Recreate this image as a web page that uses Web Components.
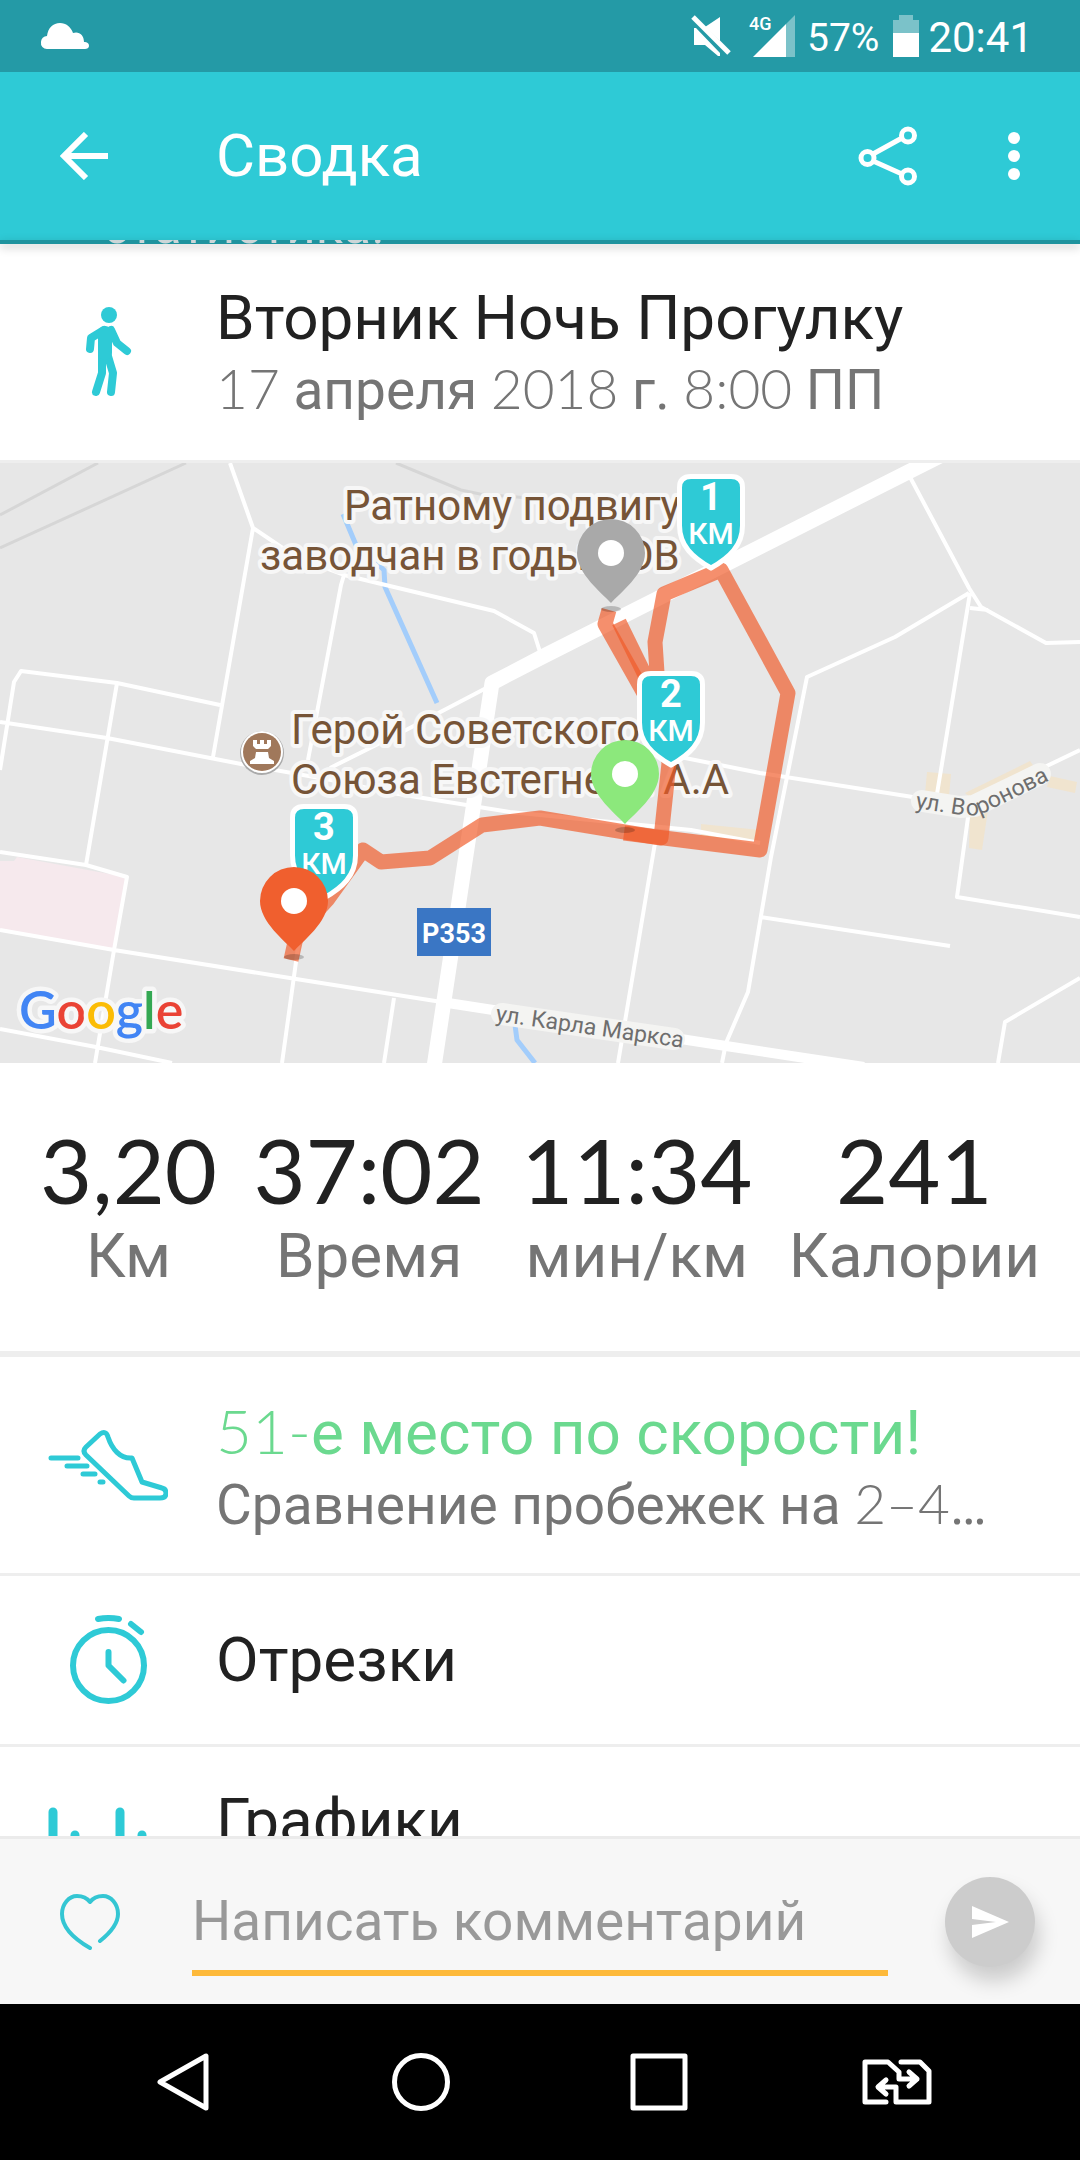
<!DOCTYPE html>
<html lang="ru">
<head>
<meta charset="utf-8">
<meta name="viewport" content="width=device-width, initial-scale=1">
<title>Сводка</title>
<style>
  html, body { height: 100%; }
  body {
    margin: 0;
    background: #fff;
    color: #212121;
    font-family: Roboto, "Noto Sans", sans-serif;
    --teal: #2ecad6;
    --teal-dark: #249aa6;
    --muted: #757575;
    --line: #eee;
    --num: Lato, Roboto, sans-serif;
  }
</style>
</head>
<body>
<run-summary></run-summary>

<script>
// Attaches an open shadow root and fills it from the class's static markup.
class BaseElement extends HTMLElement {
  constructor() {
    super();
    this.attachShadow({ mode: "open" });
    this.shadowRoot.innerHTML = this.constructor.markup;
  }
}

// <status-bar> — system icons, battery and time.
class StatusBar extends BaseElement {
  static markup = `
    <style>
      :host {
        display: flex;
        align-items: center;
        height: 72px;
        padding: 0 47px 0 41px;
        background: var(--teal-dark);
        color: #fff;
      }
      svg { display: block; overflow: visible; fill: #fff; }
      .right { display: flex; align-items: center; margin-left: auto; }
      .mute { margin-right: 18px; }
      .signal { margin-right: 12px; }
      .pct, .time { padding-top: 4px; line-height: 56px; }
      .pct { font-size: 39px; margin-right: 14px; }
      .battery { margin-right: 9px; }
      .time { font-size: 42px; }
    </style>
    <svg width="48" height="26" viewBox="0 0 48 26"><path d="M6 26a6 6 0 0 1-6-7 6 6 0 0 1 6-6C7 5 12 0 19 0c6 0 11 4 13 10 6-2 11 2 11 9 3 0 5 1 5 4 0 2-2 3-4 3z"/></svg>
    <div class="right">
      <svg class="mute" width="40" height="42" viewBox="0 0 40 42">
        <path d="M29 2v24L14 12zM3 13h2l24 25v3h-2L14 30H3z"/>
        <path d="M2 2l36 36" stroke="#fff" stroke-width="5"/>
      </svg>
      <svg class="signal" width="46" height="42" viewBox="0 0 46 42">
        <path d="M46 0v42h-9V9z" opacity=".4"/>
        <path d="M37 9v33H4z"/>
        <text x="0" y="15" font-size="18" font-weight="500">4G</text>
      </svg>
      <span class="pct">57%</span>
      <svg class="battery" width="26" height="42" viewBox="0 0 26 42">
        <path d="M6 0h14v5h6v13H0V5h6z" opacity=".4"/>
        <path d="M0 18h26v24H0z"/>
      </svg>
      <span class="time">20:41</span>
    </div>
  `;
}

// <app-bar> — toolbar; the slot holds the screen title.
class AppBar extends BaseElement {
  static markup = `
    <style>
      :host {
        display: flex;
        align-items: center;
        height: 168px;
        padding-right: 36px;
        background: var(--teal);
        color: #fff;
      }
      button {
        display: flex;
        align-items: center;
        justify-content: center;
        height: 120px;
        padding: 0;
        border: 0;
        background: none;
        color: inherit;
      }
      .back { width: 168px; margin-right: 48px; }
      .share { width: 120px; }
      .more { width: 60px; margin-left: 36px; }
      h1 { flex: 1; margin: 0; font-size: 60px; line-height: 72px; font-weight: 400; }
      svg { fill: none; stroke: currentColor; }
    </style>
    <button class="back" aria-label="Назад">
      <svg width="48" height="48" viewBox="0 0 48 48" stroke-width="6"><path d="M26 2L4 24l22 22M4 24h44"/></svg>
    </button>
    <h1><slot></slot></h1>
    <button class="share" aria-label="Поделиться">
      <svg width="60" height="60" viewBox="0 0 60 60" stroke-width="5">
        <circle cx="9.500" cy="32" r="6.500"/><circle cx="50" cy="9.500" r="6.500"/><circle cx="50" cy="50.500" r="6.500"/>
        <path d="M15 28l29-16M15 35l29 13"/>
      </svg>
    </button>
    <button class="more" aria-label="Ещё">
      <svg width="12" height="48" viewBox="0 0 12 48"><g fill="#fff" stroke="none"><circle cx="6" cy="6" r="6"/><circle cx="6" cy="24" r="6"/><circle cx="6" cy="42" r="6"/></g></svg>
    </button>
  `;
}

// <scrolled-banner> — last pixels of the banner that has scrolled under the toolbar.
class ScrolledBanner extends BaseElement {
  static markup = `
    <style>
      :host {
        display: block;
        position: relative;
        box-shadow: 0 3px 10px rgba(0, 0, 0, .25);
      }
      div {
        display: flex;
        align-items: flex-end;
        height: 4px;
        padding-left: 103px;
        overflow: hidden;
        background: #1f939e;
        color: #ccd6d8;
        font-size: 51px;
        line-height: 36px;
      }
    </style>
    <div><slot></slot></div>
  `;
}

// <info-row> — icon column plus a title and an optional second line.
// With href the whole row becomes a link.
class InfoRow extends BaseElement {
  static markup = `
    <style>
      :host { display: block; border-bottom: 3px solid var(--line); }
      a {
        display: flex;
        align-items: center;
        min-height: 168px;
        color: inherit;
        text-decoration: none;
      }
      :host([tall]) a { min-height: 216px; }
      .icon { flex: none; width: 216px; display: flex; justify-content: center; color: var(--teal); }
      .text { flex: 1; min-width: 0; padding-right: 48px; }
      .title, .sub { white-space: nowrap; overflow: hidden; text-overflow: ellipsis; }
      .title { font-size: 62px; line-height: 72px; color: var(--title, #212121); }
      .sub { display: none; font-size: 55px; line-height: 68px; color: var(--muted); }
      :host([tall]) .sub { display: block; height: 68px; }
    </style>
    <a>
      <div class="icon"><slot name="icon"></slot></div>
      <div class="text">
        <div class="title"><slot></slot></div>
        <div class="sub"><slot name="sub"></slot></div>
      </div>
    </a>
  `;

  connectedCallback() {
    const href = this.getAttribute("href");
    if (href) this.shadowRoot.querySelector("a").href = href;
  }
}

// Custom elements can't live inside an SVG, so the map's markers are plain groups.
const shield = (x, y, n) => `
  <g transform="translate(${x} ${y})">
    <path d="M-20 2.500h40q11.500 0 11.500 11v38c0 20-13 32-31.500 42.500C-18.500 83.500-31.500 71.500-31.500 51.500v-38q0-11 11.500-11z" fill="#2ecad6" stroke="#fff" stroke-width="5"/>
    <text y="36" text-anchor="middle" font-size="38" font-weight="700" fill="#fff">${n}</text>
    <text y="70" text-anchor="middle" font-size="30" font-weight="500" fill="#fff">КМ</text>
  </g>`;

const pin = (x, y, color) => `
  <g transform="translate(${x} ${y})">
    <ellipse cy="6" rx="10" ry="3" fill="#000" opacity=".2"/>
    <path d="M0 0C-9-10-34-29-34-50a34 34 0 0 1 68 0C34-29 9-10 0 0z" fill="${color}"/>
    <circle cy="-50" r="13" fill="#fff"/>
  </g>`;

// <route-map> — static map with the walked route.
class RouteMap extends BaseElement {
  static markup = `
    <style>
      :host { display: block; background: #e7e7e7; }
      svg { display: block; width: 100%; aspect-ratio: 9 / 5; }
      text { font-family: Roboto, "Noto Sans", sans-serif; }
      .thin, .wide, .rail, .river, .route { fill: none; stroke-linejoin: round; }
      .thin { stroke: #fff; stroke-width: 4; }
      .wide { stroke: #fff; }
      .rail { stroke: #d6d6d6; stroke-width: 3; }
      .river { stroke: #a3cdfb; stroke-width: 5; }
      .route { stroke: #f05a28; stroke-width: 15; opacity: .68; }
      .place, .logo { paint-order: stroke; stroke: #f7f7f7; stroke-linejoin: round; }
      .place { font-size: 42px; fill: #765437; stroke-width: 8; }
      .street { font-size: 23px; fill: #6e6e6e; }
      /* a glyph-by-glyph halo would cover the neighbours on a bend, so streets get a band */
      .band { fill: none; stroke: #f4f4f2; stroke-width: 22; stroke-linejoin: round; stroke-linecap: round; }
      .logo { font-family: Lato, sans-serif; font-size: 52px; font-weight: 600; stroke-width: 9; }
    </style>
    <svg viewBox="0 0 1080 600" preserveAspectRatio="xMidYMid slice" role="img" aria-label="Карта маршрута">
      <path d="M17 394L126 414 114 486 0 467V398H14z" fill="#f6e9ed"/>
      <g fill="#f0e4cf">
        <path d="M701 361L760 367 757 381 701 373zM927 309L951 311 948 344 924 342zM965 330L1030 298 1040 312 980 344zM1050 313L1077 319 1075 330 1047 324zM970 344L988 347 982 387 969 385z"/>
      </g>
      <path class="rail" d="M0 52L98 0M0 85L186 0M396 0L461 27 480 31 540 36"/>
      <path class="river" d="M343 51L356 82 384 107 385 124 437 240M515 562L517 577 535 600"/>
      <path class="thin" d="M230 0L253 65 296 94 344 112 494 148 534 170 540 189M253 65L213 294M344 112L341 122 308 297M0 307L14 219 21 208 117 220 220 242M0 259L107 275 241 301 331 317 386 329 510 349 691 367 760 380M117 220L86 402M492 222L406 267 330 305M910 14L969 125 981 144 1046 180 1080 179M969 130L895 174 807 214 771 394 748 529 726 580 722 600M970 130L936 337M970 145L988 147M1080 287L970 340 957 434 1080 454M660 290L760 310 919 335 969 344M760 454L950 483M1080 515L1005 559 998 600M655 380L618 600M0 389L86 402 127 414 114 487 95 600M0 467L114 487 296 516 448 540M0 566L96 584 172 600M300 470L282 600M394 535L384 600"/>
      <path class="wide" stroke-width="15" d="M434 604L492 220 540 195 920 3 950-12"/>
      <path class="wide" stroke-width="10" d="M448 540L726 583 864 604"/>

      <g class="place">
        <text x="344" y="57">Ратному подвигу</text>
        <text x="260" y="107">заводчан в годы ВОВ</text>
        <text x="291" y="281">Герой Советского</text>
        <text x="291" y="331">Союза Евстегнева А.А</text>
      </g>
      <path class="band" d="M922 338L960 344 974 343 1040 311"/>
      <path class="band" d="M502 551L674 576"/>
      <path id="voronova" d="M915 345L961 352Q976 354 988 348L1090 297" fill="none"/>
      <path id="marksa" d="M495 558L720 590" fill="none"/>
      <text class="street"><textPath href="#voronova">ул. В<tspan dx="2">оронова</tspan></textPath></text>
      <text class="street"><textPath href="#marksa">ул. Карла Маркса</textPath></text>

      <circle cx="262" cy="290" r="22" fill="#aaa"/>
      <circle cx="262" cy="289" r="21" fill="#fff"/>
      <circle cx="262" cy="289" r="19" fill="#a0785b"/>
      <path d="M253 277h4v4h3v-4h4v4h3v-4h4v6l-3 3h-12l-3-3zM256 289h12l1 6 5 3v3h-24v-3l5-3z" fill="#fff"/>

      <path class="route" d="M624 370L760 387 788 230 721 107 664 131 655 179 658 225 666 255 619 159"/>
      <path class="route" d="M609 147L605 161 662 262 669 300 661 375 540 355 482 362 430 395 381 399 363 387 327 437 297 470 291 497"/>

      ${pin(611, 140, "#a9a9a9")}
      ${shield(711, 11, 1)}
      ${shield(671, 208, 2)}
      ${shield(324, 341, 3)}
      ${pin(625, 361, "#8ce87c")}
      ${pin(294, 488, "#f05f2e")}

      <path d="M417 445h74v48h-74z" fill="#3a76c4"/>
      <text x="454" y="480" text-anchor="middle" font-size="27" font-weight="700" fill="#fff">P353</text>
      <text class="logo" x="19" y="566"><tspan fill="#4285f4">G</tspan><tspan fill="#ea4335">o</tspan><tspan fill="#fbbc05">o</tspan><tspan fill="#4285f4">g</tspan><tspan fill="#34a853">l</tspan><tspan fill="#ea4335">e</tspan></text>
    </svg>
  `;
}

// <stat-item label="..."> — big number over its unit.
class StatItem extends BaseElement {
  static markup = `
    <style>
      :host { display: block; text-align: center; white-space: nowrap; }
      .value { font-family: var(--num); font-size: 90px; line-height: 104px; }
      .label { font-size: 62px; line-height: 70px; color: var(--muted); }
    </style>
    <div class="value"><slot></slot></div>
    <div class="label"></div>
  `;

  connectedCallback() {
    this.shadowRoot.querySelector(".label").textContent = this.getAttribute("label");
  }
}

class StatsBar extends BaseElement {
  static markup = `
    <style>
      :host {
        display: flex;
        justify-content: space-between;
        padding: 54px 40px 60px;
        border-bottom: 6px solid var(--line);
      }
    </style>
    <slot></slot>
  `;
}

// <comment-bar> — like button, comment field and send button.
class CommentBar extends BaseElement {
  static markup = `
    <style>
      :host {
        display: flex;
        align-items: center;
        height: 165px;
        padding-right: 45px;
        border-top: 3px solid #ebebeb;
        background: #f7f7f7;
      }
      button { display: flex; align-items: center; justify-content: center; padding: 0; border: 0; background: none; }
      .like { flex: none; width: 180px; height: 120px; margin-right: 12px; }
      input {
        flex: 1;
        min-width: 0;
        height: 108px;
        box-sizing: border-box;
        margin: 0 57px 0 0;
        padding: 4px 0 0;
        border: 0;
        border-bottom: 6px solid #fdb93a;
        border-radius: 0;
        outline: 0;
        background: none;
        color: #212121;
        font: 400 55px/72px Roboto, "Noto Sans", sans-serif;
      }
      input::placeholder { color: #999; opacity: 1; }
      .send {
        flex: none;
        width: 90px;
        height: 90px;
        border-radius: 50%;
        background: #ccc;
        box-shadow: 4px 14px 20px rgba(0, 0, 0, .18);
      }
    </style>
    <button class="like" aria-label="Нравится">
      <svg width="60" height="56" viewBox="0 0 60 56" fill="none" stroke="#34c6d3" stroke-width="4" stroke-linecap="round" stroke-linejoin="round"><path d="M40 47C50 39 58 30 58 20 58 10 51 2 43 2c-6 0-10 2-13 6C27 4 23 2 17 2 9 2 2 10 2 20c0 14 14 26 28 34"/></svg>
    </button>
    <input type="text" placeholder="Написать комментарий" aria-label="Написать комментарий">
    <button class="send" aria-label="Отправить">
      <svg width="37" height="32" viewBox="0 0 37 32" fill="#fff"><path d="M0 0l37 16L0 32V19l24-3L0 13z"/></svg>
    </button>
  `;
}

// <nav-bar> — system navigation keys.
class NavBar extends BaseElement {
  static markup = `
    <style>
      :host { display: flex; height: 156px; padding: 0 64px; background: #000; }
      button {
        flex: 1;
        display: flex;
        align-items: center;
        justify-content: center;
        padding: 0;
        border: 0;
        background: none;
      }
      svg { fill: none; stroke: #fff; stroke-width: 5; stroke-linejoin: round; stroke-linecap: round; }
    </style>
    <button aria-label="Назад"><svg width="52" height="58" viewBox="0 0 52 58"><path d="M49 3v52L3 29z"/></svg></button>
    <button aria-label="Домой"><svg width="58" height="58" viewBox="0 0 58 58"><circle cx="29" cy="29" r="26.500"/></svg></button>
    <button aria-label="Обзор"><svg width="58" height="58" viewBox="0 0 58 58"><path d="M3 3h52v52H3z"/></svg></button>
    <button aria-label="Сменить SIM">
      <svg width="70" height="46" viewBox="0 0 70 46">
        <path d="M24 43H3V3h23l11 10v7h18M47 13l8 7-8 7M39 3h19l9 9v31H34V28H18M24 21l-8 7 8 7"/>
      </svg>
    </button>
  `;
}

// <run-summary> — the whole screen.
class RunSummary extends BaseElement {
  static markup = `
    <style>
      :host { display: flex; flex-direction: column; height: 100vh; min-width: 0; }
      main { flex: 1; min-height: 0; overflow: hidden; }
      /* digits use a lighter face than the Cyrillic text around them */
      .n { font-family: var(--num); font-weight: 300; }
      svg { display: block; fill: none; stroke: currentColor; stroke-linecap: round; stroke-linejoin: round; }
      .rank { --title: #6bd98f; }
    </style>
    <status-bar></status-bar>
    <app-bar>Сводка</app-bar>
    <scrolled-banner>статистика!</scrolled-banner>
    <main>
      <info-row tall>
        <svg slot="icon" width="48" height="90" viewBox="0 0 48 90" stroke-width="8">
          <circle cx="25" cy="8" r="8" fill="currentColor" stroke="none"/>
          <path d="M20 23L7 31 6 42M27 23l6 13 10 8M18 48v18l-6 19M23 46l6 20-2 19"/>
          <path d="M21 26v20" stroke-width="14"/>
        </svg>
        Вторник Ночь Прогулку
        <span slot="sub"><span class="n">17</span> апреля <span class="n">2018</span> г. <span class="n">8:00</span> ПП</span>
      </info-row>
      <route-map></route-map>
      <stats-bar>
        <stat-item label="Км">3,20</stat-item>
        <stat-item label="Время">37:02</stat-item>
        <stat-item label="мин/км">11:34</stat-item>
        <stat-item label="Калории">241</stat-item>
      </stats-bar>
      <info-row tall class="rank" href="#rank">
        <svg slot="icon" width="120" height="71" viewBox="0 0 120 71" stroke-width="5">
          <path d="M52 4L38 17q-4 4 0 8l43 41q2 2 5 2h26q6 0 6-5 0-4-4-5L94 52 84 28C72 29 64 19 60 7q-2-7-8-3zM3 28h27M19 36h20M35 44h12M52 52h3"/>
        </svg>
        <span class="n">51-</span>е место по скорости!
        <span slot="sub">Сравнение пробежек на <span class="n">2–4</span>…</span>
      </info-row>
      <info-row href="#splits">
        <svg slot="icon" width="77" height="90" viewBox="0 0 77 90" stroke-width="6">
          <circle cx="38.500" cy="50.500" r="35.500"/>
          <path d="M38.500 37v13.500l15 15M28 4q10.500-2 21 0M61 9l10 8"/>
        </svg>
        Отрезки
      </info-row>
      <info-row tall href="#charts">
        <svg slot="icon" width="120" height="96" viewBox="0 0 120 96" stroke-width="9">
          <path d="M5 5v86M27 28v63M72 5v86M94 28v63"/>
        </svg>
        Графики
      </info-row>
    </main>
    <comment-bar></comment-bar>
    <nav-bar></nav-bar>
  `;
}

customElements.define("status-bar", StatusBar);
customElements.define("app-bar", AppBar);
customElements.define("scrolled-banner", ScrolledBanner);
customElements.define("info-row", InfoRow);
customElements.define("route-map", RouteMap);
customElements.define("stat-item", StatItem);
customElements.define("stats-bar", StatsBar);
customElements.define("comment-bar", CommentBar);
customElements.define("nav-bar", NavBar);
customElements.define("run-summary", RunSummary);
</script>
</body>
</html>
